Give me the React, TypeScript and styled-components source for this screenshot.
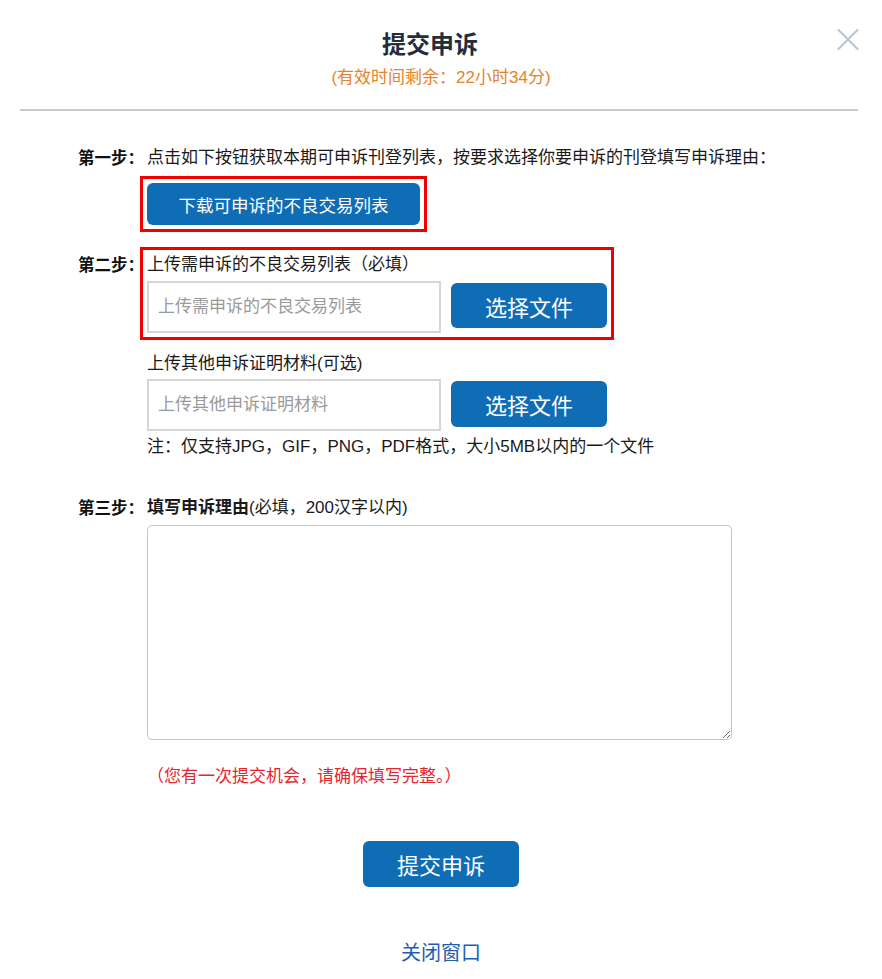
import React from "react";
import styled, { createGlobalStyle } from "styled-components";

const Global = createGlobalStyle`
  html, body { margin: 0; padding: 0; background: #fff; }
  body {
    font-family: "Liberation Sans", "Noto Sans CJK SC", sans-serif;
    color: #1e1e1e;
    -webkit-font-smoothing: antialiased;
  }
  * { box-sizing: border-box; }
`;

const Page = styled.div`
  position: relative;
  width: 882px;
  min-height: 979px;
  display: flex;
  flex-direction: column;
`;

const Header = styled.header`
  display: flex;
  flex-direction: column;
  align-items: center;
  padding-top: 29px;
`;

const Title = styled.h1`
  margin: 0;
  padding-right: 22px;
  font-size: 24px;
  line-height: 32px;
  font-weight: 700;
  color: #232d3b;
`;

const Subtitle = styled.div`
  margin-top: 6px;
  font-size: 17px;
  line-height: 22px;
  color: #e8832a;
`;

const CloseButton = styled.button`
  position: absolute;
  top: 29px;
  right: 23px;
  width: 22px;
  height: 21px;
  padding: 0;
  border: none;
  background: transparent;
  cursor: pointer;
  display: flex;
`;

const Divider = styled.hr`
  margin: 20px 24px 0 20px;
  height: 2px;
  border: none;
  background: #cacaca;
`;

const Body = styled.main`
  display: flex;
  flex-direction: column;
  padding-top: 36px;
`;

const Step = styled.section<{ $mt?: number }>`
  display: grid;
  grid-template-columns: 147px 1fr;
  margin-top: ${(p) => p.$mt ?? 0}px;
`;

const StepLabel = styled.div<{ $offset?: number }>`
  padding-left: 78px;
  padding-top: ${(p) => p.$offset ?? 0}px;
  font-size: 16.5px;
  line-height: 22px;
  font-weight: 700;
  color: #111;
  white-space: nowrap;
`;

const Content = styled.div`
  display: flex;
  flex-direction: column;
  align-items: flex-start;
`;

const Text = styled.div<{ $mt?: number }>`
  margin-top: ${(p) => p.$mt ?? 0}px;
  font-size: 17px;
  line-height: 22px;
  color: #1a1a1a;
  white-space: nowrap;
`;

const Strong = styled.span`
  font-weight: 700;
`;

const Highlight = styled.div<{ $mt?: number }>`
  margin-top: ${(p) => p.$mt ?? 0}px;
  margin-left: -7px;
  border: 3px solid #f00000;
  padding: 4px;
  display: flex;
  flex-direction: column;
  align-items: flex-start;
`;

const PrimaryButton = styled.button<{ $w: number; $h: number; $fs: number }>`
  width: ${(p) => p.$w}px;
  height: ${(p) => p.$h}px;
  border: none;
  border-radius: 6px;
  background: #0f6db5;
  color: #fff;
  font-family: inherit;
  font-size: ${(p) => p.$fs}px;
  cursor: pointer;
  padding: 0;
`;

const FileRow = styled.div<{ $mt?: number }>`
  display: flex;
  align-items: flex-start;
  gap: 10px;
  margin-top: ${(p) => p.$mt ?? 0}px;
`;

const FileInput = styled.input`
  width: 294px;
  height: 52px;
  border: 2px solid #d5d5d5;
  padding: 0 9px;
  font-family: inherit;
  font-size: 17px;
  color: #333;
  outline: none;
  &::placeholder { color: #9a9a9a; }
`;

const ChooseButton = styled(PrimaryButton)`
  margin-top: 2px;
`;

const Reason = styled.textarea`
  margin-top: 6px;
  width: 585px;
  height: 215px;
  border: 1.5px solid #b5c8de;
  border-radius: 5px;
  font-family: inherit;
  font-size: 16px;
  padding: 6px 8px;
  outline: none;
`;

const Warning = styled.div`
  margin-top: 26px;
  font-size: 17px;
  line-height: 22px;
  color: #e5262f;
`;

const Footer = styled.footer`
  display: flex;
  flex-direction: column;
  align-items: center;
  padding-top: 53px;
`;

const CloseLink = styled.a`
  margin-top: 53px;
  font-size: 20px;
  line-height: 26px;
  color: #1c5fb2;
  text-decoration: none;
  cursor: pointer;
`;

export default function App() {
  return (
    <>
      <Global />
      <Page>
        <Header>
          <Title>提交申诉</Title>
          <Subtitle>(有效时间剩余：22小时34分)</Subtitle>
        </Header>
        <CloseButton aria-label="关闭">
          <svg width="22" height="21" viewBox="0 0 22 21">
            <path d="M1.5 1 L20.5 20 M20.5 1 L1.5 20" stroke="#b7c7d9" strokeWidth="2.2" strokeLinecap="round" />
          </svg>
        </CloseButton>
        <Divider />
        <Body>
          <Step>
            <StepLabel>第一步：</StepLabel>
            <Content>
              <Text>点击如下按钮获取本期可申诉刊登列表，按要求选择你要申诉的刊登填写申诉理由：</Text>
              <Highlight $mt={7}>
                <PrimaryButton $w={273} $h={42} $fs={17.5}>下载可申诉的不良交易列表</PrimaryButton>
              </Highlight>
            </Content>
          </Step>

          <Step $mt={15}>
            <StepLabel $offset={7}>第二步：</StepLabel>
            <Content>
              <Highlight>
                <Text>上传需申诉的不良交易列表（必填）</Text>
                <FileRow $mt={5}>
                  <FileInput placeholder="上传需申诉的不良交易列表" readOnly />
                  <ChooseButton $w={156} $h={45} $fs={22}>选择文件</ChooseButton>
                </FileRow>
              </Highlight>
              <Text $mt={13}>上传其他申诉证明材料(可选)</Text>
              <FileRow $mt={4}>
                <FileInput placeholder="上传其他申诉证明材料" readOnly />
                <ChooseButton $w={156} $h={46} $fs={22}>选择文件</ChooseButton>
              </FileRow>
              <Text $mt={5}>注：仅支持JPG，GIF，PNG，PDF格式，大小5MB以内的一个文件</Text>
            </Content>
          </Step>

          <Step $mt={39}>
            <StepLabel>第三步：</StepLabel>
            <Content>
              <Text>
                <Strong>填写申诉理由</Strong>(必填，200汉字以内)
              </Text>
              <Reason />
              <Warning>（您有一次提交机会，请确保填写完整。）</Warning>
            </Content>
          </Step>
        </Body>
        <Footer>
          <PrimaryButton $w={156} $h={46} $fs={22}>提交申诉</PrimaryButton>
          <CloseLink>关闭窗口</CloseLink>
        </Footer>
      </Page>
    </>
  );
}
